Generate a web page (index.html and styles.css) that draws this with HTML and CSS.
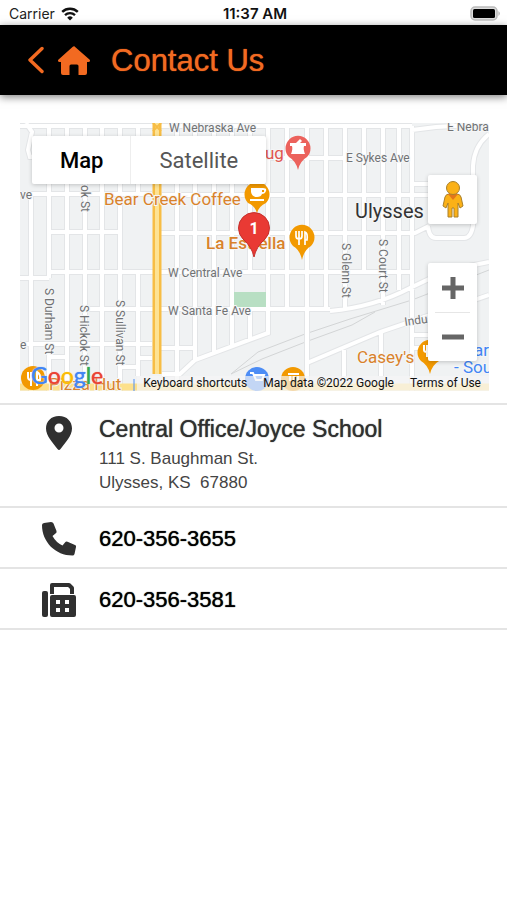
FILE: index.html
```html
<!DOCTYPE html>
<html lang="en">
<head>
  <meta charset="UTF-8">
  <meta name="viewport" content="width=device-width, initial-scale=1.0">
  <title>Contact Us</title>
  <link rel="stylesheet" href="styles.css">
</head>
<body>
  <div class="status-bar">
    <div class="carrier">
      <span>Carrier</span>
      <svg width="18" height="14" viewBox="0 0 18 14">
        <path d="M1.200 4.900 A11.500 11.500 0 0 1 16.800 4.900" fill="none" stroke="#111" stroke-width="2.500"/>
        <path d="M4 8.200 A7.200 7.200 0 0 1 14 8.200" fill="none" stroke="#111" stroke-width="2.300"/>
        <path d="M9 13.600 L6.200 10.700 A4 4 0 0 1 11.800 10.700 Z" fill="#111"/>
      </svg>
    </div>
    <div class="clock">11:37 AM</div>
    <div class="battery">
      <svg width="31" height="15" viewBox="0 0 31 15">
        <rect x="1" y="1" width="26" height="13" rx="4" fill="#ddd" stroke="#bbb" stroke-width="1.500"/>
        <rect x="3" y="3" width="22" height="9" rx="1.500" fill="#000"/>
        <path d="M28.500 5 Q31 7.500 28.500 10 Z" fill="#aaa"/>
      </svg>
    </div>
  </div>

  <header class="header">
    <a href="#" class="back-link" aria-label="Back">
      <svg width="16" height="28" viewBox="0 0 16 28">
        <path d="M14 2.500 L2 14 L14 25.500" fill="none" stroke="#f26a21" stroke-width="3.400" stroke-linecap="round" stroke-linejoin="round"/>
      </svg>
    </a>
    <a href="#" class="home-link" aria-label="Home">
      <svg width="34" height="31" viewBox="0 0 34 31">
        <path d="M17 1 L33 15 Q33.500 17 31.500 17 H30 V28 Q30 30 28 30 H21.500 V21 Q21.500 19.500 20 19.500 H14 Q12.500 19.500 12.500 21 V30 H6 Q4 30 4 28 V17 H2.500 Q0.500 17 1 15 L15.500 2 Q17 0.500 18.500 2 Z" fill="#f26a21"/>
      </svg>
    </a>
    <h1>Contact Us</h1>
  </header>

  <main>
    <div class="map">
      <svg class="map-canvas" viewBox="20 123 469 268" preserveAspectRatio="xMidYMid slice">
        <rect x="20" y="123" width="469" height="268" fill="#f0f2f3"/>

        <!-- railway -->
        <g class="rail">
          <path d="M231 374 L258 352 L305 334 L350 319 L412 300 L489 270"/>
          <path d="M231 374 L262 359 L308 341 L352 325 L375 312"/>
        </g>

        <!-- streets: grey outline first, white fill above it -->
        <g class="street-edge">
          <use href="#streets"/>
        </g>
        <g class="street">
          <path id="streets" d="M20 126 H412 M412 130 L436 127 L489 124
            M20 194 H152 M162 158 H345 M162 195 H428 M49 232 H120 M160 233 H415 L429 226
            M20 278 H49 M49 272 H412 M85 309 H330 M20 344 H152 M160 348 H195
            M31 194 V391 M49 126 V278 M49 344 V391 M67 126 V391 M85 126 V391 M102 126 V391 M120 126 V391
            M138 126 V194 M138 272 V376 M177 126 V391 M195 126 V360 M214 126 V352 M232 126 V346 M250 126 V272 M250 309 V339
            M268 126 V333 L195 360 L180 374 H162
            M287 126 V309 M307 126 V391 M326 126 V309 M345 126 V309 M364 126 V272 M383 126 V305
            M399 126 V290 M412 126 V391
            M49 357 H67 M120 367 H138 M138 358 H152 M412 184 H428
            M26 123 L32 132 L28 150 L30 157 L32 157
            M489 134 Q474 146 473 166 V226 Q471 238 464 238 H436 Q429 238 428 226
            M330 311 Q374 307 410 288 T489 262
            M307 363 L380 332 L489 295 M344 350 V391 M381 332 V376 M412 335 H430 M412 348 H430"/>
        </g>
        <rect x="234" y="292" width="32" height="15" fill="#b8dfc3"/>

        <!-- highways -->
        <g fill="none">
          <path d="M20 387 H489" stroke="#fde08c" stroke-width="7"/>
          <path d="M157 123 V374" stroke="#f7bd45" stroke-width="9"/>
          <path d="M157 123 V374" stroke="#fde293" stroke-width="4"/>
          <path d="M153 123 L161 131 M161 123 L153 131" stroke="#f7bd45" stroke-width="2"/>
          <path d="M134 379 V391" stroke="#4d8df5" stroke-width="1"/>
        </g>

        <g class="street-name">
          <text x="169" y="132">W Nebraska Ave</text>
          <text x="447" y="131">E Nebra</text>
          <text x="346" y="162">E Sykes Ave</text>
          <text x="20" y="199">ve</text>
          <text x="168" y="277">W Central Ave</text>
          <text x="168" y="315">W Santa Fe Ave</text>
          <text x="20" y="349">e</text>
          <text transform="translate(81 185) rotate(90)">ok St</text>
          <text transform="translate(45 288) rotate(90)">S Durham St</text>
          <text transform="translate(80 305) rotate(90)">S Hickok St</text>
          <text transform="translate(116 300) rotate(90)">S Sullivan St</text>
          <text transform="translate(342 243) rotate(90)">S Glenn St</text>
          <text transform="translate(379 239) rotate(90)">S Court St</text>
          <text transform="translate(405 326) rotate(-8)">Indu</text>
        </g>
        <text class="city" x="355" y="218">Ulysses</text>

        <!-- places -->
        <g class="place">
          <text x="265" y="159" class="place-red">ug</text>
          <text x="104" y="205">Bear Creek Coffee</text>
          <text x="206" y="249" class="place-bold">La Estrella</text>
          <text x="357" y="363">Casey's</text>
          <text x="49" y="390">Pizza Hut</text>
          <text x="474" y="356" class="place-blue">ar</text>
          <text x="454" y="373" class="place-blue">- Sou</text>
        </g>

        <path d="M298 170 Q296 161 289 157 A12.500 12.500 0 1 1 307 157 Q300 161 298 170 Z" fill="#ec625c"/>
        <path d="M290 143 H296 L300 139 L302 141 L300 143 H306 V146 H304 Q303 149 305 154 H291 Q293 149 292 146 H290 Z" fill="#fff"/>

        <path d="M257 213 Q255 206 248 203 A12.500 12.500 0 1 1 266 203 Q259 206 257 213 Z" fill="#f29900"/>
        <path fill-rule="evenodd" d="M251 188 H263 Q267 188 266 191 Q265 194 262 194 Q261 197 257 197 Q252 197 251 192 Z M262 190 V192 H264 V190 Z M250 199 H264 V201 H250 Z" fill="#fff"/>

        <path d="M302 260 Q300 250 293 246 A12.500 12.500 0 1 1 311 246 Q304 250 302 260 Z" fill="#f29900"/>
        <path d="M296 231 V236 Q296 239 299 239 V245 M299 231 V239 M302 231 V236 Q302 239 299 239 M305 245 V232 Q308 233 307 240 H305" fill="none" stroke="#fff" stroke-width="1.700"/>

        <path d="M430 374 Q428 365 421 361 A12.500 12.500 0 1 1 439 361 Q432 365 430 374 Z" fill="#f29900"/>
        <path d="M424 345 V350 Q424 352 427 352 V357 M427 345 V352" fill="none" stroke="#fff" stroke-width="2"/>

        <circle cx="33" cy="378" r="12" fill="#f29900"/>
        <path d="M28 372 V377 Q28 380 31 380 V386 M31 372 V380 M37 386 V372 Q41 374 40 380 H37" fill="none" stroke="#fff" stroke-width="2"/>
        <circle cx="257" cy="379" r="12" fill="#4d8df5"/>
        <path d="M250 373 H253 L256 380 H262 L264 375 H254" fill="none" stroke="#fff" stroke-width="2"/>
        <circle cx="293" cy="379" r="12" fill="#f29900"/>
        <path d="M288 374 H299 M290 376 V381 M294 376 V381 M298 376 V381" stroke="#fff" stroke-width="2"/>

        <path d="M254 257 Q252 247 243 239 A15.500 15.500 0 1 1 265 239 Q256 247 254 257 Z" fill="#e93a34" stroke="#c5302c" stroke-width="1"/>
        <text class="pin-number" x="254" y="234">1</text>
      </svg>

      <div class="map-type">
        <button type="button" class="active">Map</button>
        <button type="button">Satellite</button>
      </div>

      <button type="button" class="map-button pegman" aria-label="Street View">
        <svg width="24" height="40" viewBox="0 0 24 40">
          <path d="M8 14 H16 Q19 14 20 17 L22 26 L19 28 L17 23 V37 H13 V28 H11 V37 H7 V23 L5 28 L2 26 L4 17 Q5 14 8 14 Z" fill="#fbb117" stroke="#a9802c" stroke-width="1"/>
          <path d="M7 14 H17 L12 20 Z" fill="#e3761b"/>
          <circle cx="12" cy="8" r="6.500" fill="#fbb117" stroke="#a9802c"/>
        </svg>
      </button>

      <div class="zoom-control">
        <button type="button" class="map-button" aria-label="Zoom in">
          <svg width="24" height="24" viewBox="0 0 24 24"><path d="M1 12 H23 M12 1 V23" stroke="#666" stroke-width="5"/></svg>
        </button>
        <button type="button" class="map-button" aria-label="Zoom out">
          <svg width="24" height="24" viewBox="0 0 24 24"><path d="M1 12 H23" stroke="#666" stroke-width="5"/></svg>
        </button>
      </div>

      <div class="google">
        <span class="blue">G</span><span class="red">o</span><span class="yellow">o</span><span class="blue">g</span><span class="green">l</span><span class="red">e</span>
      </div>

      <div class="map-footer">
        <button type="button">Keyboard shortcuts</button>
        <span>Map data ©2022 Google</span>
        <a href="#">Terms of Use</a>
      </div>
    </div>

    <ul class="contact-list">
      <li class="contact-item address">
        <svg class="icon" width="36" height="36" viewBox="0 0 36 36">
          <path fill-rule="evenodd" d="M18 1 C10 1 5 6.500 5 13.500 C5 21 12 28 16.500 34 Q18 36 19.500 34 C24 28 31 21 31 13.500 C31 6.500 26 1 18 1 Z M18 8.500 A4.500 4.500 0 1 1 18 17.500 A4.500 4.500 0 1 1 18 8.500 Z" fill="#303030"/>
        </svg>
        <div>
          <h2>Central Office/Joyce School</h2>
          <p>111 S. Baughman St.</p>
          <p>Ulysses, KS&nbsp; 67880</p>
        </div>
      </li>
      <li class="contact-item">
        <svg class="icon" width="36" height="36" viewBox="0 0 36 36">
          <path d="M3 2 L10 1 Q12 1 12.500 2.500 L15.500 10 Q16 11.500 14.500 12.500 L11.500 15 Q15 21.500 21.500 24.500 L24 21.500 Q25 20 26.500 20.700 L34 24 Q35.500 24.500 35 26 L33.500 33 Q33 34.500 31.500 34.500 C14.500 34.500 1 21 1 4 Q1 2.400 3 2 Z" fill="#303030"/>
        </svg>
        <a href="tel:620-356-3655">620-356-3655</a>
      </li>
      <li class="contact-item">
        <svg class="icon" width="36" height="36" viewBox="0 0 36 36">
          <rect x="1" y="9" width="6" height="26" rx="2" fill="#303030"/>
          <path d="M11 12 V3 H28 L31 6 V12" fill="none" stroke="#303030" stroke-width="4" stroke-linejoin="round"/>
          <path fill-rule="evenodd" d="M11 13 H33 Q35 13 35 15 V33 Q35 35 33 35 H11 Q9 35 9 33 V15 Q9 13 11 13 Z M15 18 V22 H19 V18 Z M24 18 V22 H28 V18 Z M15 26 V30 H19 V26 Z M24 26 V30 H28 V26 Z" fill="#303030"/>
        </svg>
        <a href="tel:620-356-3581">620-356-3581</a>
      </li>
    </ul>
  </main>
</body>
</html>
```
FILE: styles.css
```css
* {
  margin: 0;
  padding: 0;
  box-sizing: border-box;
}

body {
  background: #fff;
  color: #303030;
  font-family: "Liberation Sans", Arial, sans-serif;
}

button {
  border: none;
  background: none;
  font-family: inherit;
  cursor: pointer;
}

svg {
  display: block;
}

/* Status bar */
.status-bar {
  display: grid;
  grid-template-columns: 1fr auto 1fr;
  align-items: center;
  height: 25px;
  padding: 2px 6px 0 9px;
  font-family: Inter, sans-serif;
  font-size: 14px;
  color: #222;
}

.carrier {
  display: flex;
  align-items: center;
  gap: 6px;
}

.clock {
  color: #111;
  font-size: 15px;
  font-weight: 600;
}

.battery {
  justify-self: end;
}

/* Header */
.header {
  display: flex;
  align-items: center;
  height: 70px;
  padding: 0 28px;
  background: #000;
  box-shadow: 0 2px 8px rgba(0, 0, 0, 0.5);
}

.home-link {
  margin: 0 20px 0 13px;
}

.header h1 {
  padding-top: 2px;
  color: #f26a21;
  font-size: 31px;
  font-weight: normal;
  text-shadow: 0 0 1px #f26a21;
}

/* Map */
.map {
  position: relative;
  height: 268px;
  margin: 28px 18px 12px 20px;
  overflow: hidden;
  font-family: Roboto, sans-serif;
}

.map-canvas {
  width: 100%;
  height: 100%;
}

.rail {
  fill: none;
  stroke: #d3d5d6;
  stroke-width: 1;
}

.street-edge {
  fill: none;
  stroke: #e3e5e7;
  stroke-width: 6;
}

.street {
  fill: none;
  stroke: #fff;
  stroke-width: 4;
}

.street-name {
  fill: #707274;
  font-size: 12px;
}

.street-name text,
.place text,
.city {
  paint-order: stroke;
  stroke: #f5f6f7;
  stroke-width: 2;
}

.city {
  fill: #333;
  font-size: 20px;
}

.place {
  fill: #d9822b;
  font-size: 17px;
}

.place-red {
  fill: #e0554f;
}

.place-blue {
  fill: #4285f4;
}

.place-bold {
  font-weight: 500;
}

.pin-number {
  fill: #fff;
  font-size: 16px;
  font-weight: bold;
  text-anchor: middle;
}

.map-type {
  position: absolute;
  top: 13px;
  left: 12px;
  display: flex;
  background: #fff;
  border-radius: 2px;
  box-shadow: 0 1px 4px rgba(0, 0, 0, 0.2);
}

.map-type button {
  height: 48px;
  padding: 0 28px;
  color: #565656;
  font-size: 22px;
}

.map-type .active {
  padding-right: 27px;
  border-right: 1px solid #eee;
  color: #000;
  font-weight: 500;
}

.map-button {
  display: flex;
  align-items: center;
  justify-content: center;
  width: 49px;
  height: 49px;
}

.pegman,
.zoom-control {
  position: absolute;
  right: 12px;
  background: #fff;
  border-radius: 2px;
  box-shadow: 0 1px 4px rgba(0, 0, 0, 0.2);
}

.pegman {
  top: 52px;
}

.zoom-control {
  top: 140px;
}

.zoom-control .map-button + .map-button::before {
  content: "";
  position: absolute;
  top: 49px;
  left: 7px;
  right: 7px;
  height: 1px;
  background: #e6e6e6;
}

.google {
  position: absolute;
  left: 11px;
  bottom: 2px;
  font-family: Lato, sans-serif;
  font-size: 23px;
  line-height: 28px;
  text-shadow: 0 0 1px currentColor, 0 0 2px #fff;
}

.google span {
  text-shadow: 0 0 1px currentColor, 0 0 2px #fff;
}

.blue { color: #4285f4; }
.red { color: #ea4335; }
.yellow { color: #fbbc05; }
.green { color: #34a853; }

.map-footer {
  position: absolute;
  right: 0;
  bottom: 0;
  display: flex;
  gap: 16px;
  padding: 0 8px 0 6px;
  background: rgba(245, 245, 245, 0.7);
  color: #111;
  font-size: 12px;
  line-height: 15px;
}

.map-footer button,
.map-footer a {
  color: inherit;
  font-size: 12px;
  line-height: 15px;
  text-decoration: none;
}

/* Contact rows */
.contact-list {
  border-top: 2px solid #e4e4e4;
  list-style: none;
}

.contact-item {
  display: flex;
  align-items: center;
  gap: 22px;
  min-height: 61px;
  padding: 2px 41px 0;
  border-bottom: 2px solid #e4e4e4;
}

.contact-item .icon {
  flex-shrink: 0;
}

.contact-item a {
  color: #000;
  font-size: 22px;
  text-decoration: none;
  text-shadow: 0 0 1px #000;
}

.address {
  align-items: flex-start;
  padding-top: 10px;
  padding-bottom: 11px;
}

.address h2 {
  margin-bottom: 4px;
  font-size: 23px;
  font-weight: normal;
  line-height: 28px;
  text-shadow: 0 0 1px #303030;
}

.address p {
  color: #444;
  font-size: 17px;
  line-height: 24px;
}
```
